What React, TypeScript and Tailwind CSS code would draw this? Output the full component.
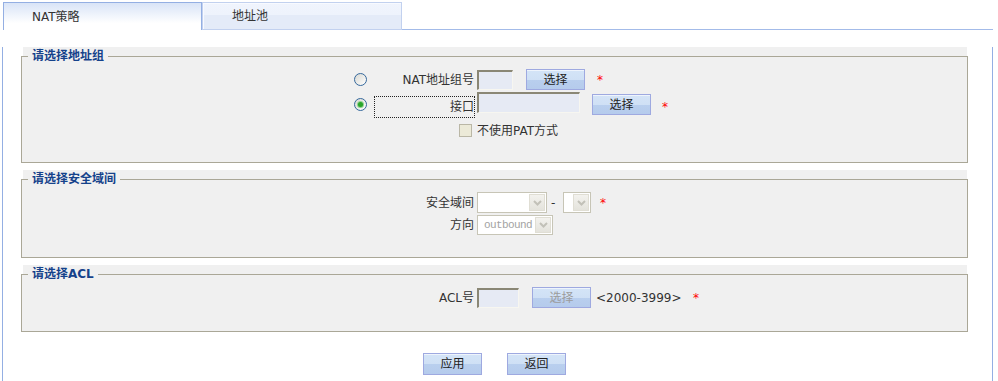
import React from "react";

const Btn = ({ children, disabled, className = "" }: { children: React.ReactNode; disabled?: boolean; className?: string }) => (
  <button
    type="button"
    className={`flex h-[21px] w-[59px] items-center justify-center border border-[#9ea9e0] bg-[linear-gradient(to_bottom,#d4e4f7_0%,#cfe0f5_52%,#b9cfee_52%,#b5cbec_100%)] shadow-[inset_0_1px_0_#eef4fc] text-[12px] leading-none ${
      disabled ? "text-[#9c9c9c]" : "text-[#222]"
    } ${className}`}
  >
    {children}
  </button>
);

const TextBox = ({ className = "" }: { className?: string }) => (
  <input
    type="text"
    className={`h-[20px] border-t-2 border-l-2 border-r border-b border-t-[#8a8775] border-l-[#8a8775] border-r-[#f7f6f0] border-b-[#f7f6f0] bg-[#e6eaf4] outline-none ${className}`}
  />
);

const Chevron = () => (
  <svg width="9" height="6" viewBox="0 0 9 6">
    <path d="M1 1 L4.5 4.5 L8 1" fill="none" stroke="#c2c1b8" strokeWidth="2" />
  </svg>
);

const Select = ({ className = "", text }: { className?: string; text?: string }) => (
  <div className={`flex items-center border border-[#c7c5b6] bg-white p-[1px] ${className}`}>
    <div className="flex-1 overflow-hidden pl-[5px] font-['Courier_New','Liberation_Mono',monospace] text-[11px] tracking-[-0.6px] text-[#a3a3a3]">
      {text}
    </div>
    <div className="flex h-full w-[16px] items-center justify-center border border-[#e0ded4] bg-[linear-gradient(to_bottom,#f3f2ee,#e4e3dc)]">
      <Chevron />
    </div>
  </div>
);

const Radio = ({ checked, className = "" }: { checked?: boolean; className?: string }) => (
  <span
    className={`flex h-[13px] w-[13px] items-center justify-center rounded-full border border-[#35689c] bg-[linear-gradient(135deg,#d8d8d2,#ffffff)] ${className}`}
  >
    {checked && <span className="h-[5px] w-[5px] rounded-full bg-[#2aa52a] shadow-[0_0_0_1px_#8fd18f]" />}
  </span>
);

const Star = ({ className = "" }: { className?: string }) => (
  <span className={`text-[12px] leading-none text-[#ff0000] ${className}`}>*</span>
);

const Group = ({ title, height, className = "", children }: { title: string; height: string; className?: string; children: React.ReactNode }) => (
  <div className={`ml-[18px] w-[947px] ${className}`}>
    <div className="ml-[2px] mr-[1px] h-[9px] bg-[#f0f0f0]" />
    <div className={`relative border border-[#aaa797] bg-[#f0f0f0] ${height}`}>
      <span className="absolute -top-[9px] left-[6px] bg-[#f0f0f0] px-[4px] text-[12px] font-bold leading-[16px] text-[#15428b]">
        {title}
      </span>
      {children}
    </div>
  </div>
);

export default function App() {
  return (
    <div className="h-[381px] w-[998px] overflow-hidden bg-white font-['DejaVu_Sans','Noto_Sans_CJK_SC',sans-serif] text-[12px] text-[#333]">
      {/* tabs */}
      <div className="flex pl-[3px] pr-[5px] pt-[2px]">
        <div className="flex h-[28px] w-[199px] items-center border-l border-r border-t border-[#94afe3] bg-[linear-gradient(to_bottom,#d9e4f7,#ffffff_75%)] pl-[28px]">
          NAT策略
        </div>
        <div className="flex h-[28px] w-[200px] items-center border border-[#c2d1ef] bg-[linear-gradient(to_bottom,#f0f4fd_0%,#eef3fc_45%,#e4ebf8_45%,#e4ebf8_100%)] pl-[29px] shadow-[inset_1px_1px_0_#f8faff]">
          地址池
        </div>
        <div className="flex-1 border-b border-[#a3bbe9]" />
      </div>

      {/* frame */}
      <div className="ml-[2px] h-[351px] w-[991px] border-l border-r border-[#94afe3]">
        <Group title="请选择地址组" height="h-[107px]" className="mt-[17px]">
          <div className="mt-[12px] flex h-[21px] items-center">
            <Radio className="ml-[332px]" />
            <span className="w-[107px] text-right">NAT地址组号</span>
            <TextBox className="ml-[3px] w-[36px]" />
            <Btn className="ml-[13px]">选择</Btn>
            <Star className="ml-[12px]" />
          </div>
          <div className="mt-[2px] flex h-[26px] items-start">
            <Radio checked className="ml-[332px] mt-[6px]" />
            <span className="ml-[7px] mt-[4px] flex h-[22px] w-[101px] items-center justify-end border border-dotted border-[#222]">
              接口
            </span>
            <TextBox className="ml-[2px] h-[21px] w-[103px]" />
            <Btn className="ml-[12px] mt-[2px]">选择</Btn>
            <Star className="ml-[11px] mt-[9px]" />
          </div>
          <div className="mt-[6px] flex h-[13px] items-center">
            <span className="ml-[437px] h-[13px] w-[13px] border border-[#bab7a6] bg-[#ecead8]" />
            <span className="ml-[5px]">不使用PAT方式</span>
          </div>
        </Group>

        <Group title="请选择安全域间" height="h-[79px]" className="mt-[7px]">
          <div className="mt-[12px] flex h-[21px] items-center">
            <span className="w-[452px] text-right">安全域间</span>
            <Select className="ml-[3px] h-[21px] w-[70px]" />
            <span className="ml-[4px] w-[12px]">-</span>
            <Select className="h-[21px] w-[28px]" />
            <Star className="ml-[9px]" />
          </div>
          <div className="mt-[2px] flex h-[20px] items-center">
            <span className="w-[452px] text-right">方向</span>
            <Select className="ml-[3px] h-[20px] w-[76px]" text="outbound" />
          </div>
        </Group>

        <Group title="请选择ACL" height="h-[58px]" className="mt-[7px]">
          <div className="mt-[12px] flex h-[21px] items-center">
            <span className="w-[452px] text-right">ACL号</span>
            <TextBox className="ml-[3px] w-[42px]" />
            <Btn disabled className="ml-[13px]">选择</Btn>
            <span className="ml-[5px] w-[97px]">&lt;2000-3999&gt;</span>
            <Star />
          </div>
        </Group>

        <div className="ml-[18px] mt-[21px] flex w-[947px] justify-center gap-[25px]">
          <Btn className="h-[22px]">应用</Btn>
          <Btn className="h-[22px]">返回</Btn>
        </div>
      </div>
    </div>
  );
}
